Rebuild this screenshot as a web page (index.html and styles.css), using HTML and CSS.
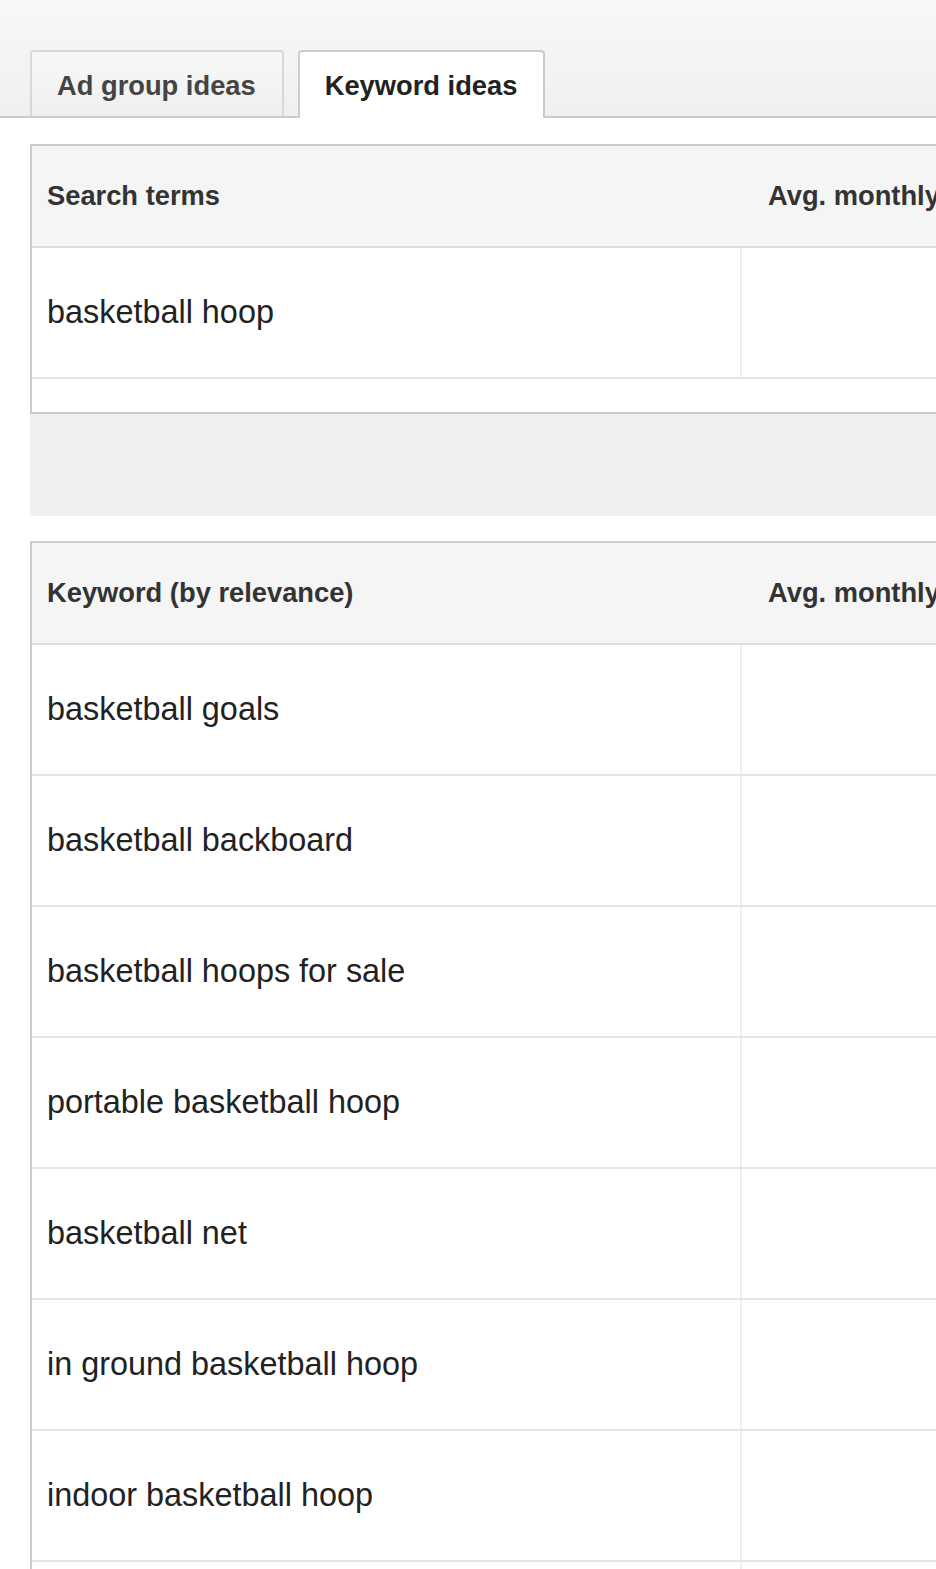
FILE: index.html
```html
<!DOCTYPE html>
<html lang="en">
<head>
<meta charset="utf-8">
<title>Keyword Planner</title>
<link rel="stylesheet" href="styles.css">
</head>
<body>
<div class="tabbar">
  <div class="tab">Ad group ideas</div>
  <div class="tab tab-active">Keyword ideas</div>
</div>
<main class="content">
  <section class="grid grid-search">
    <div class="grid-head">
      <div class="hcell hcell-main">Search terms</div>
      <div class="hcell hcell-metric">Avg. monthly searches</div>
    </div>
    <div class="grid-row">
      <div class="cell cell-main">basketball hoop</div>
      <div class="cell cell-metric"></div>
    </div>
    <div class="grid-spacer"></div>
  </section>
  <div class="band"></div>
  <section class="grid">
    <div class="grid-head">
      <div class="hcell hcell-main">Keyword (by relevance)</div>
      <div class="hcell hcell-metric">Avg. monthly searches</div>
    </div>
    <div class="grid-row"><div class="cell cell-main">basketball goals</div><div class="cell cell-metric"></div></div>
    <div class="grid-row"><div class="cell cell-main">basketball backboard</div><div class="cell cell-metric"></div></div>
    <div class="grid-row"><div class="cell cell-main">basketball hoops for sale</div><div class="cell cell-metric"></div></div>
    <div class="grid-row"><div class="cell cell-main">portable basketball hoop</div><div class="cell cell-metric"></div></div>
    <div class="grid-row"><div class="cell cell-main">basketball net</div><div class="cell cell-metric"></div></div>
    <div class="grid-row"><div class="cell cell-main">in ground basketball hoop</div><div class="cell cell-metric"></div></div>
    <div class="grid-row"><div class="cell cell-main">indoor basketball hoop</div><div class="cell cell-metric"></div></div>
    <div class="grid-row grid-row-last"><div class="cell cell-main"></div><div class="cell cell-metric"></div></div>
  </section>
</main>
</body>
</html>
```

FILE: styles.css
```css
html, body {
  margin: 0;
  padding: 0;
  background: #ffffff;
  overflow: hidden;
}
body {
  width: 936px;
  height: 1569px;
  font-family: "Liberation Sans", Arial, sans-serif;
  color: #222222;
}
.tabbar {
  display: flex;
  align-items: flex-end;
  gap: 14px;
  height: 66px;
  padding: 50px 0 0 30px;
  background: linear-gradient(to bottom, #f8f8f8 0%, #f3f3f3 60%, #f0f0f0 100%);
  border-bottom: 2px solid #cccccc;
}
.tab {
  box-sizing: border-box;
  height: 66px;
  display: flex;
  align-items: center;
  padding: 3px 26px 0 25px;
  border: 2px solid #d8d8d8;
  border-bottom: none;
  border-radius: 4px 4px 0 0;
  background: linear-gradient(to bottom, #f8f8f8, #efefef);
  font-size: 27.3px;
  font-weight: bold;
  color: #444444;
  white-space: nowrap;
}
.tab-active {
  height: 68px;
  margin-bottom: -2px;
  padding: 1px 26px 0 25px;
  background: #ffffff;
  border-color: #cccccc;
  color: #222222;
}
.content {
  padding: 26px 0 0 30px;
  width: 1400px;
}
.grid {
  border: 2px solid #cccccc;
  border-right: none;
  width: 1300px;
}
.grid-head {
  display: flex;
  height: 100px;
  background: #f5f5f5;
  border-bottom: 2px solid #dddddd;
}
.hcell {
  display: flex;
  align-items: center;
  font-size: 27.3px;
  font-weight: bold;
  color: #333333;
  white-space: nowrap;
}
.hcell-main {
  width: 710px;
  padding-left: 15px;
  box-sizing: border-box;
}
.hcell-metric {
  padding-left: 26px;
}
.grid-row {
  display: flex;
  height: 129px;
  border-bottom: 2px solid #e5e5e5;
}
.cell {
  display: flex;
  align-items: center;
  font-size: 32.4px;
  color: #222222;
  white-space: nowrap;
}
.cell-main {
  width: 710px;
  padding-left: 15px;
  box-sizing: border-box;
  border-right: 2px solid #eeeeee;
}
.cell-metric {
  flex: 1;
}
.grid-spacer {
  height: 33px;
}
.band {
  height: 102px;
  background: #f0f0f0;
  margin-bottom: 25px;
  width: 1300px;
}
```
